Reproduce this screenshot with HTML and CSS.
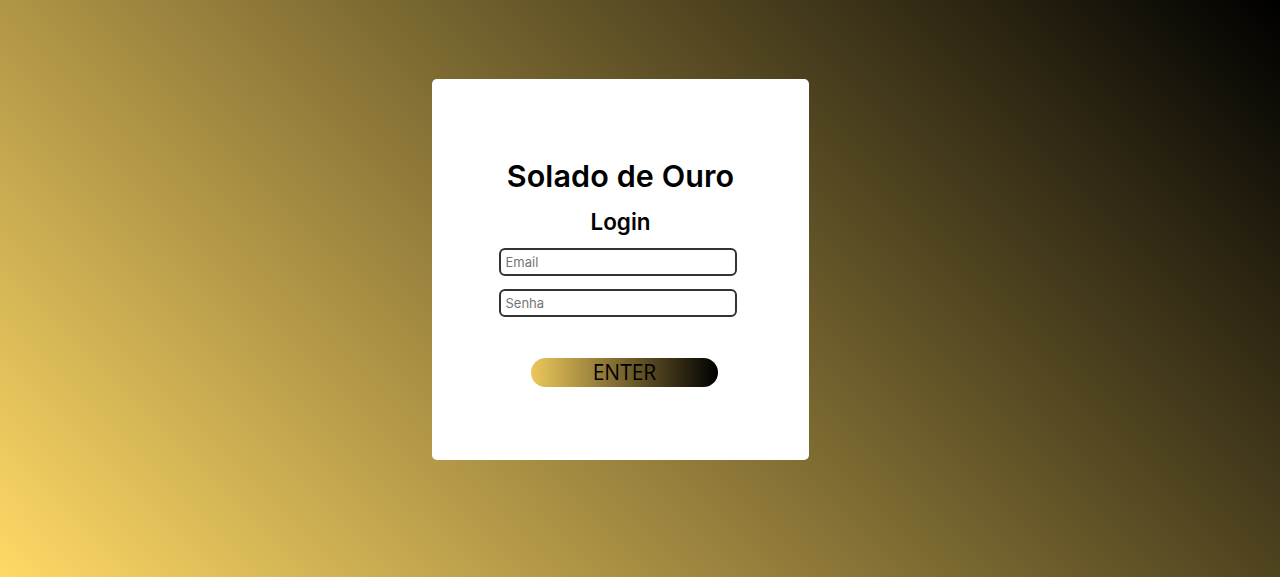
FILE: index.html
```html
<!DOCTYPE html>
<html lang="pt-BR">
<head>
<meta charset="utf-8">
<title>Solado de Ouro - Login</title>
<link rel="stylesheet" href="styles.css">
</head>
<body>
<main class="page">
  <form class="card">
    <h1 class="title">Solado de Ouro</h1>
    <h2 class="subtitle">Login</h2>
    <input class="field" type="email" placeholder="Email">
    <input class="field" type="password" placeholder="Senha">
    <button class="enter" type="button">ENTER</button>
  </form>
</main>
</body>
</html>
```
FILE: styles.css
```css
html, body {
  margin: 0;
  height: 100%;
}
body {
  background: linear-gradient(45deg, #ffd966 0%, #000000 100%);
  font-family: Inter, "Noto Sans", sans-serif;
}
.page {
  height: 100%;
  box-sizing: border-box;
  display: flex;
  align-items: center;
  justify-content: center;
  padding: 0 39px 38px 0;
}
.card {
  width: 377px;
  height: 381px;
  box-sizing: border-box;
  background: #ffffff;
  border-radius: 5px;
  padding-top: 77px;
  display: flex;
  flex-direction: column;
  align-items: center;
}
.title {
  margin: 0;
  font-size: 30.5px;
  line-height: 40px;
  font-weight: 600;
  color: #000;
  letter-spacing: 0.1px;
}
.subtitle {
  margin: 11px 0 11px;
  font-size: 22.5px;
  line-height: 30px;
  font-weight: 600;
  color: #000;
}
.field {
  width: 238px;
  height: 28px;
  box-sizing: border-box;
  margin: 0 6px 13px 0;
  padding: 0 5px;
  border: 2px solid #333333;
  border-radius: 6px;
  font-family: Inter, "Noto Sans", sans-serif;
  font-size: 13px;
  color: #222;
  background: #fff;
  outline: none;
}
.field::placeholder {
  color: #757575;
}
.enter {
  margin-top: 28px;
  margin-left: 8px;
  width: 187px;
  height: 29px;
  border: none;
  border-radius: 15px;
  background: linear-gradient(90deg, #ecc75c 0%, #000000 100%);
  font-family: "Open Sans", sans-serif;
  font-size: 21px;
  line-height: 29px;
  color: #000;
  padding: 0;
  cursor: pointer;
}
```
